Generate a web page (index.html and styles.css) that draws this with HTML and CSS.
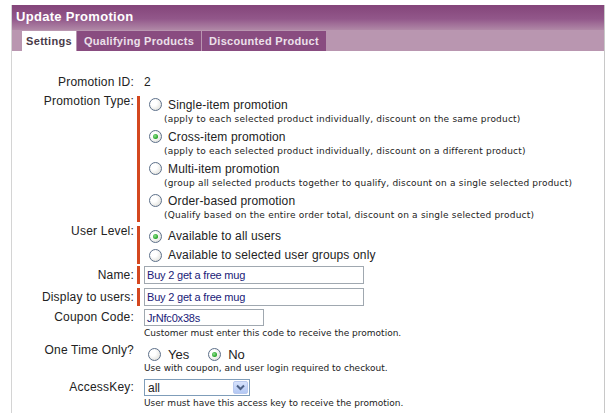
FILE: index.html
```html
<!DOCTYPE html>
<html lang="en">
<head>
    <meta charset="UTF-8">
    <title>Update Promotion</title>
    <link rel="stylesheet" href="styles.css">
</head>
<body>

    <div class="panel">
        <!-- Header -->
        <div class="title">Update Promotion</div>
        <div class="tabs">
            <div class="tab active tab-settings">Settings</div>
            <div class="tab tab-wide">Qualifying Products</div>
            <div class="tab tab-wide">Discounted Product</div>
        </div>

        <!-- Settings form -->
        <div class="form">
            <div class="row row-id">
                <div class="label">Promotion ID:</div>
                <div class="field plain">2</div>
            </div>

            <div class="row">
                <div class="label label-top">Promotion Type:</div>
                <div class="field required">
                    <div class="option">
                        <div class="opt-title"><span class="radio"></span>Single-item promotion</div>
                        <div class="opt-note">(apply to each selected product individually, discount on the same product)</div>
                    </div>
                    <div class="option">
                        <div class="opt-title"><span class="radio checked"></span>Cross-item promotion</div>
                        <div class="opt-note">(apply to each selected product individually, discount on a different product)</div>
                    </div>
                    <div class="option">
                        <div class="opt-title"><span class="radio"></span>Multi-item promotion</div>
                        <div class="opt-note">(group all selected products together to qualify, discount on a single selected product)</div>
                    </div>
                    <div class="option">
                        <div class="opt-title"><span class="radio"></span>Order-based promotion</div>
                        <div class="opt-note">(Qualify based on the entire order total, discount on a single selected product)</div>
                    </div>
                </div>
            </div>

            <div class="row row-level">
                <div class="label label-top">User Level:</div>
                <div class="field required">
                    <div class="choice"><span class="radio checked"></span>Available to all users</div>
                    <div class="choice"><span class="radio"></span>Available to selected user groups only</div>
                </div>
            </div>

            <div class="row">
                <div class="label">Name:</div>
                <div class="field required">
                    <div class="input wide">Buy 2 get a free mug</div>
                </div>
            </div>

            <div class="row row-display">
                <div class="label">Display to users:</div>
                <div class="field required">
                    <div class="input wide">Buy 2 get a free mug</div>
                </div>
            </div>

            <div class="row">
                <div class="label label-input">Coupon Code:</div>
                <div class="field plain">
                    <div class="input short">JrNfc0x38s</div>
                    <div class="help">Customer must enter this code to receive the promotion.</div>
                </div>
            </div>

            <div class="row">
                <div class="label label-onetime">One Time Only?</div>
                <div class="field plain">
                    <div class="inline-radios">
                        <span class="radio"></span>Yes
                        <span class="radio checked second"></span>No
                    </div>
                    <div class="help">Use with coupon, and user login required to checkout.</div>
                </div>
            </div>

            <div class="row">
                <div class="label label-input">AccessKey:</div>
                <div class="field plain">
                    <div class="select">
                        <span>all</span>
                        <span class="select-btn">
                            <svg width="9" height="7" viewBox="0 0 9 7"><path d="M1 1.5 L4.5 5 L8 1.5" fill="none" stroke="#4d6185" stroke-width="2"/></svg>
                        </span>
                    </div>
                    <div class="help">User must have this access key to receive the promotion.</div>
                </div>
            </div>
        </div>
    </div>

</body>
</html>
```

FILE: styles.css
```css
* {
    margin: 0;
    padding: 0;
    box-sizing: border-box;
}

body {
    background: #fff;
    font-family: "Liberation Sans", Arial, sans-serif;
    font-size: 12px;
    color: #222;
}

/* Panel */
.panel {
    margin: 5px 0 0 11px;
    width: 594px;
    height: 408px;
    border-left: 1px solid #d4d4d4;
    border-right: 1px solid #c8c8c8;
}

.title {
    height: 25px;
    line-height: 24px;
    padding-left: 4px;
    background: linear-gradient(#84457a, #92578a 55%, #b088a6);
    color: #fff;
    font-weight: bold;
    font-size: 13px;
    letter-spacing: 0.3px;
}

/* Tabs */
.tabs {
    height: 21px;
    background: #b996b0;
    padding-left: 10px;
    display: flex;
    align-items: flex-end;
    gap: 1px;
}

.tab {
    height: 20px;
    line-height: 20px;
    text-align: center;
    background: #894c80;
    color: #ece0ea;
    font-weight: bold;
    font-size: 11px;
    letter-spacing: 0.3px;
}

.tab-settings {
    width: 54px;
}

.tab-wide {
    width: 124px;
}

.tab.active {
    background: #fff;
    color: #4a3a48;
}

/* Form rows */
.form {
    padding-top: 23px;
}

.row {
    display: flex;
    margin-bottom: 4px;
}

.row-id {
    margin-bottom: 6px;
}

.row-level {
    margin-bottom: 2px;
}

.row-display {
    margin-bottom: 3px;
}

.label {
    width: 122px;
    text-align: right;
    line-height: 18px;
    letter-spacing: 0.2px;
    flex-shrink: 0;
}

.row-id .label,
.row-id .field {
    line-height: 16px;
}

.label-top {
    line-height: 11px;
}

.label-input {
    line-height: 17px;
}

.label-onetime {
    line-height: 13px;
}

.field {
    margin-left: 3px;
}

.field.required {
    border-left: 3px solid #d4471f;
    padding-left: 4px;
}

.field.plain {
    padding-left: 7px;
}

/* Radio options */
.option {
    margin-bottom: 2px;
}

.option:last-child {
    margin-bottom: 0;
}

.opt-title,
.choice {
    display: flex;
    align-items: center;
    height: 16px;
    padding-top: 1px;
    letter-spacing: 0.15px;
}

.choice {
    height: 19px;
}

.opt-note {
    font-family: "DejaVu Sans", Verdana, sans-serif;
    font-size: 9px;
    letter-spacing: 0.2px;
    line-height: 14px;
    padding-left: 20px;
    color: #222;
}

.radio {
    display: inline-block;
    width: 13px;
    height: 13px;
    border-radius: 50%;
    border: 1px solid #5d708a;
    background: radial-gradient(circle at 35% 35%, #fff 30%, #e8e8e4 70%, #d4d4cc);
    margin: 0 6px 0 5px;
    position: relative;
    flex-shrink: 0;
}

.radio.checked::after {
    content: "";
    position: absolute;
    left: 3px;
    top: 3px;
    width: 5px;
    height: 5px;
    border-radius: 50%;
    background: radial-gradient(circle at 40% 40%, #8fe08f, #21a121 70%);
}

/* Inputs */
.input {
    height: 18px;
    line-height: 16px;
    border: 1px solid #a0a8b0;
    padding-left: 2px;
    color: #1a1a78;
    font-size: 11px;
    letter-spacing: -0.2px;
    background: #fff;
}

.input.wide {
    width: 220px;
}

.input.short {
    width: 120px;
    height: 17px;
}

.help {
    font-family: "DejaVu Sans", Verdana, sans-serif;
    font-size: 9px;
    line-height: 14px;
    color: #222;
}

.inline-radios {
    display: flex;
    align-items: center;
    height: 17px;
    padding-top: 3px;
    font-size: 13px;
}

.inline-radios .radio {
    margin: 0 7px 0 4px;
}

.inline-radios .radio.second {
    margin-left: 19px;
}

/* Select */
.select {
    width: 106px;
    height: 17px;
    border: 1px solid #7f9db9;
    display: flex;
    justify-content: space-between;
    align-items: center;
    padding-left: 3px;
    background: #fff;
}

.select-btn {
    width: 15px;
    height: 13px;
    margin-right: 1px;
    border: 1px solid #b9c9ee;
    border-radius: 2px;
    background: linear-gradient(#d7e2fc, #b3c8f4);
    display: flex;
    align-items: center;
    justify-content: center;
}
```
